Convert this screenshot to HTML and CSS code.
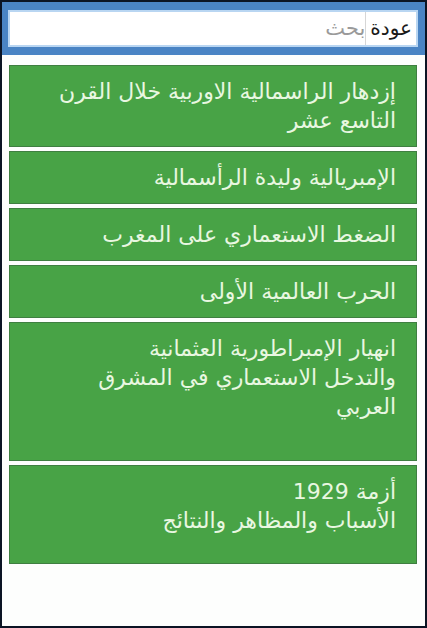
FILE: index.html
```html
<!DOCTYPE html>
<html lang="ar" dir="rtl">
<head>
<meta charset="utf-8">
<title>دروس التاريخ</title>
<link rel="stylesheet" href="styles.css">
</head>
<body>
<div class="screen">
  <header class="topbar">
    <div class="search">
      <span class="back">عودة</span>
      <span class="placeholder">بحث</span>
    </div>
  </header>
  <ul class="list">
    <li class="item">إزدهار الراسمالية الاوربية خلال القرن<br>التاسع عشر</li>
    <li class="item">الإمبريالية وليدة الرأسمالية</li>
    <li class="item">الضغط الاستعماري على المغرب</li>
    <li class="item">الحرب العالمية الأولى</li>
    <li class="item item--tall">انهيار الإمبراطورية العثمانية<br>والتدخل الاستعماري في المشرق<br>العربي</li>
    <li class="item item--extra">أزمة 1929<br>الأسباب والمظاهر والنتائج</li>
  </ul>
</div>
</body>
</html>
```

FILE: styles.css
```css
* { box-sizing: border-box; }

html, body {
  margin: 0;
  padding: 0;
  background: #ffffff;
}

body {
  font-family: "DejaVu Sans", "Noto Sans", sans-serif;
}

.screen {
  width: 427px;
  height: 628px;
  border: 2px solid #0b1424;
  background: #fdfefd;
  display: flex;
  flex-direction: column;
}

.topbar {
  height: 53px;
  background: #4a84c4;
  padding: 8px 7px 0 6px;
}

.search {
  height: 37px;
  background: #ffffff;
  border: 2px solid #b9d6f2;
  display: flex;
  align-items: center;
}

.back {
  height: 100%;
  display: flex;
  align-items: center;
  padding: 0 4px 2px 4px;
  border-left: 1px solid #d6d6d6;
  font-size: 20px;
  color: #1a1a1a;
}

.placeholder {
  padding: 0 0 2px 0;
  font-size: 21px;
  color: #9a9a9a;
}

.list {
  list-style: none;
  margin: 10px 0 0 0;
  padding: 0 8px 0 7px;
  display: flex;
  flex-direction: column;
  gap: 4px;
}

.item {
  background: #48a346;
  border: 1px solid #3f7f41;
  padding: 11px 20px 11px 10px;
  font-size: 22px;
  line-height: 29px;
  color: #e9f7e1;
  white-space: nowrap;
  text-align: right;
}

.item--tall {
  padding-bottom: 39px;
}

.item--extra {
  padding-bottom: 28px;
}
```
